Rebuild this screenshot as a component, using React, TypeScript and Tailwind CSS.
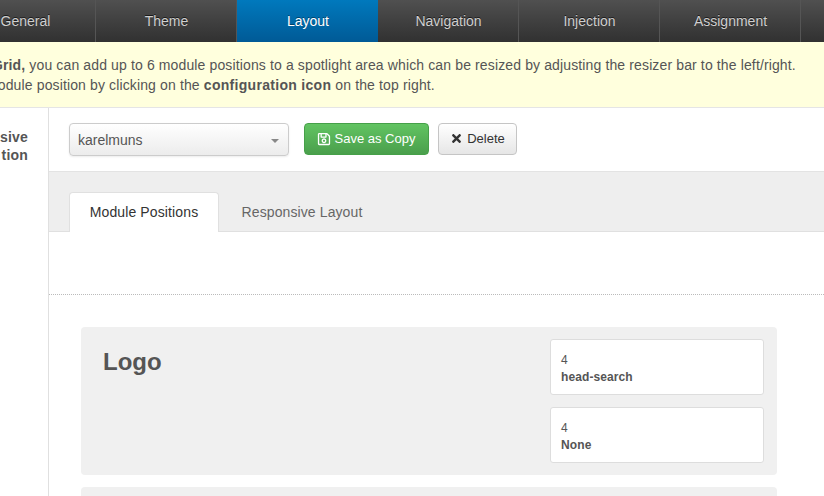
import { FaRegSave, FaTimes } from "react-icons/fa";

const tabs = ["General", "Theme", "Layout", "Navigation", "Injection", "Assignment", ""];

export default function App() {
  return (
    <div className="h-[496px] w-[824px] overflow-hidden bg-white text-[14px] leading-5 text-[#555] [font-family:'Liberation_Sans',Arial,sans-serif]">
      <nav className="ml-[-45px] flex h-[42px] bg-gradient-to-b from-[#505050] to-[#313131]">
        {tabs.map((tab) => (
          <div
            key={tab}
            className={
              tab === "Layout"
                ? "flex w-[141px] shrink-0 items-center justify-center bg-gradient-to-b from-[#0079bd] to-[#005a96] pb-[1px] pl-[1px] text-white [text-shadow:0_-1px_0_rgba(0,0,0,0.4)]"
                : "flex w-[141px] shrink-0 items-center justify-center border-r border-[#555] pb-[1px] pl-[1px] text-[#cfcfcf] [text-shadow:0_-1px_0_rgba(0,0,0,0.6)]"
            }
          >
            {tab}
          </div>
        ))}
      </nav>

      <div className="h-[66px] overflow-hidden whitespace-nowrap border-b border-[#e5e5e5] bg-[#ffffdd] pt-[13px] tracking-[0.13px]">
        <p className="ml-[-8px]">
          <b>Grid,</b> you can add up to 6 module positions to a spotlight area which can be resized by adjusting the resizer bar to the left/right.
        </p>
        <p className="ml-[-14px]">
          module position by clicking on the <b className="tracking-[0.3px]">configuration icon</b> on the top right.
        </p>
      </div>

      <div className="flex">
        <aside className="flex w-[49px] shrink-0 flex-col border-r border-[#e0e0e0] pt-[20px] pr-[20px] text-right font-bold leading-[18px] tracking-[0.2px]">
          <div>sive</div>
          <div>tion</div>
        </aside>

        <main className="min-w-0 flex-1">
          <div className="flex h-[64px] items-start border-b border-[#e3e3e3] pt-[15px] pl-[20px]">
            <div className="flex h-[33px] w-[220px] items-center justify-between rounded-[4px] border border-[#ccc] bg-gradient-to-b from-white to-[#ececec] pr-[9px] pl-[8px] text-[#555] shadow-[0_1px_2px_rgba(0,0,0,0.08)]">
              <span>karelmuns</span>
              <span className="mt-[3px] h-0 w-0 border-x-[4px] border-t-[4px] border-x-transparent border-t-[#888]" />
            </div>
            <div className="ml-[15px] flex h-[32px] w-[125px] items-center justify-center gap-[4px] rounded-[4px] border border-[#46a049] bg-gradient-to-b from-[#62c462] to-[#4a9f4c] pb-[1px] pr-[1px] text-[13px] text-white">
              <FaRegSave className="text-[14px]" />
              Save as Copy
            </div>
            <div className="ml-[9px] flex h-[32px] w-[79px] items-center justify-center gap-[4px] rounded-[4px] border border-[#c5c5c5] bg-gradient-to-b from-white to-[#e6e6e6] pb-[1px] text-[13px] text-[#333]">
              <FaTimes className="text-[13px]" />
              Delete
            </div>
          </div>

          <div className="flex h-[60px] items-end border-b border-[#e0e0e0] bg-[#eeeeee] pl-[20px]">
            <div className="-mb-px flex h-[40px] w-[150px] items-center justify-center rounded-t-[4px] border border-b-0 border-[#e0e0e0] bg-white pb-[1px] tracking-[0.12px] text-[#333]">
              Module Positions
            </div>
            <div className="flex h-[39px] w-[166px] items-center justify-center tracking-[0.1px] text-[#666]">
              Responsive Layout
            </div>
          </div>

          <div className="h-[63px] border-b border-dotted border-[#bbb]" />

          <div className="px-[32px] pt-[32px]">
            <section className="flex h-[148px] w-[696px] justify-between rounded-[4px] bg-[#f0f0f0] pt-[12px] pr-[13px] pl-[22px]">
              <h2 className="pt-[12px] text-[24px] leading-[22px] font-bold text-[#555]">Logo</h2>
              <div className="flex w-[214px] flex-col gap-[12px]">
                <PositionCard span="4" name="head-search" />
                <PositionCard span="4" name="None" />
              </div>
            </section>
            <section className="mt-[12px] h-[60px] w-[696px] rounded-[4px] bg-[#f0f0f0]" />
          </div>
        </main>
      </div>
    </div>
  );
}

function PositionCard({ span, name }: { span: string; name: string }) {
  return (
    <div className="h-[56px] rounded-[3px] border border-[#ddd] bg-white pt-[12px] pl-[10px] text-[12px] leading-[17px] text-[#555]">
      <div>{span}</div>
      <div className="font-bold tracking-[0.1px]">{name}</div>
    </div>
  );
}
